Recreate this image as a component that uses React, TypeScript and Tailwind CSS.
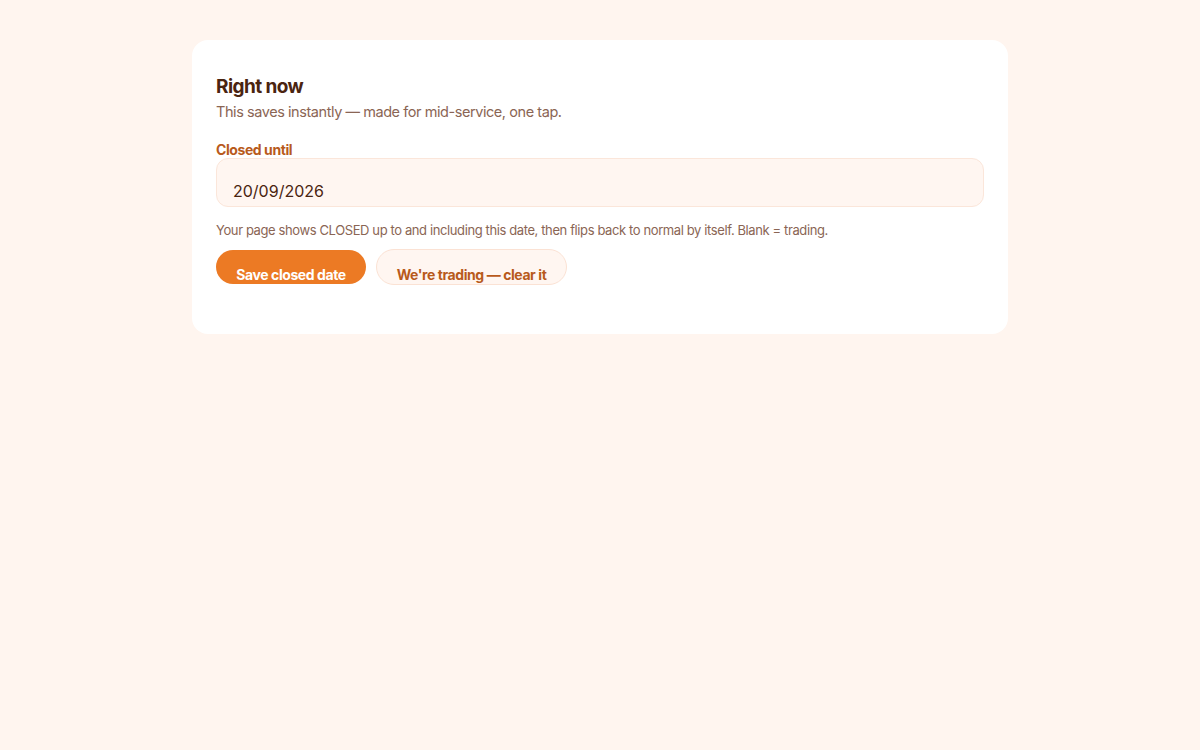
export default function App() {
  return (
    <div className="min-h-screen bg-[#fff5ef] pt-10 font-['Inter',sans-serif]">
      <section className="mx-auto w-[816px] rounded-2xl bg-white px-6 pt-[35px] pb-[49px]">
        <h2 className="text-[19px] font-bold leading-6 tracking-[-0.03em] text-[#4a2410]">Right now</h2>
        <p className="mt-[3px] text-[14.5px] leading-5 tracking-[-0.03em] text-[#8a6554]">
          This saves instantly — made for mid-service, one tap.
        </p>

        <label className="mt-[20px] block text-[14px] font-bold leading-4 tracking-[-0.03em] text-[#b85a1c]">
          Closed until
        </label>
        <div className="flex h-[49px] items-end rounded-xl border border-[#fbe6da] bg-[#fff6f1] px-4 pb-[3px]">
          <span className="text-[16px] leading-6 text-[#4a2410]">20/09/2026</span>
        </div>

        <p className="mt-[13px] text-[13px] leading-5 tracking-[-0.03em] text-[#8a6554]">
          Your page shows CLOSED up to and including this date, then flips back to normal by itself. Blank = trading.
        </p>

        <div className="mt-[10px] flex items-start gap-[10px]">
          <button className="h-[34px] w-[150px] overflow-hidden rounded-full bg-[#ec7a24] pt-[15px] text-[14px] font-bold leading-5 tracking-[-0.03em] text-white">
            Save closed date
          </button>
          <button className="-mt-px h-[36px] w-[191px] overflow-hidden rounded-full border border-[#fbe2d4] bg-[#fff6f1] pt-[15px] text-[14px] font-bold leading-5 tracking-[-0.03em] text-[#b85a1c]">
            We're trading — clear it
          </button>
        </div>
      </section>
    </div>
  );
}
